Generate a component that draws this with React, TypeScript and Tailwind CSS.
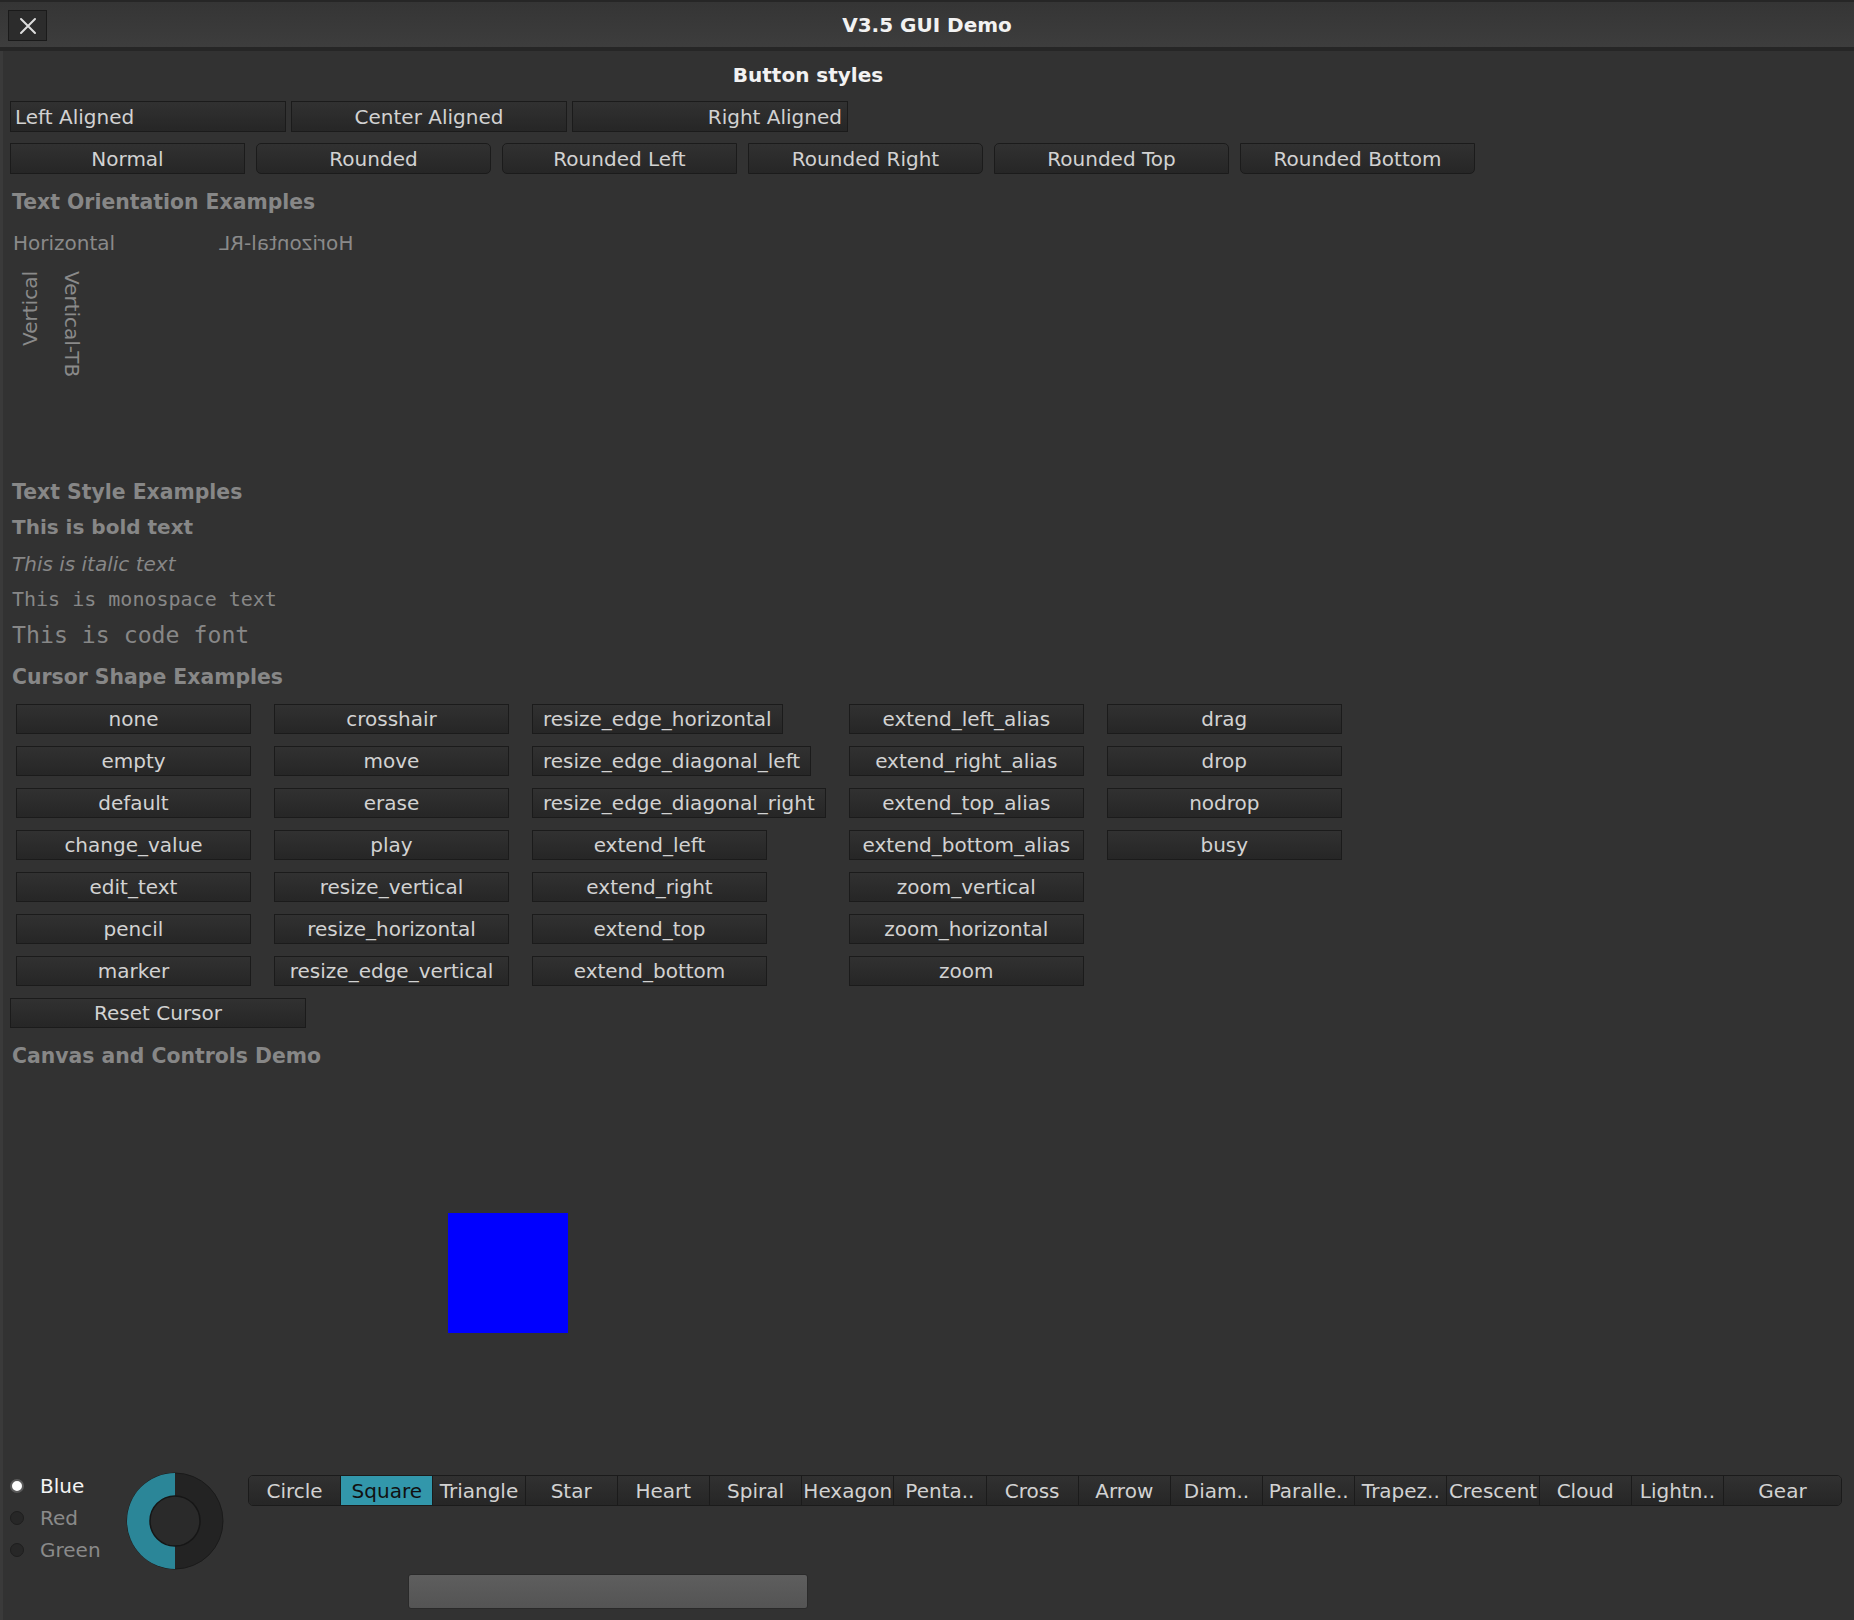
import React from 'react';

const btn =
  'flex items-center border border-[#1b1b1b] bg-linear-to-b from-[#313131] to-[#262626] text-[#d2d2d2] whitespace-nowrap';

const cursorColumns: string[][] = [
  ['none', 'empty', 'default', 'change_value', 'edit_text', 'pencil', 'marker'],
  ['crosshair', 'move', 'erase', 'play', 'resize_vertical', 'resize_horizontal', 'resize_edge_vertical'],
  [
    'resize_edge_horizontal',
    'resize_edge_diagonal_left',
    'resize_edge_diagonal_right',
    'extend_left',
    'extend_right',
    'extend_top',
    'extend_bottom',
  ],
  [
    'extend_left_alias',
    'extend_right_alias',
    'extend_top_alias',
    'extend_bottom_alias',
    'zoom_vertical',
    'zoom_horizontal',
    'zoom',
  ],
  ['drag', 'drop', 'nodrop', 'busy'],
];

const shapes = [
  'Circle',
  'Square',
  'Triangle',
  'Star',
  'Heart',
  'Spiral',
  'Hexagon',
  'Penta..',
  'Cross',
  'Arrow',
  'Diam..',
  'Paralle..',
  'Trapez..',
  'Crescent',
  'Cloud',
  'Lightn..',
];

function SectionTitle({ children, className = '' }: { children: React.ReactNode; className?: string }) {
  return (
    <div className={`flex h-[24px] items-center pl-[2px] text-[20.4px] font-bold text-[#878787] ${className}`}>
      {children}
    </div>
  );
}

function Knob() {
  return (
    <svg width="98" height="98" viewBox="0 0 98 98">
      <circle cx="49" cy="49" r="48" fill="#232323" stroke="#1a1a1a" strokeWidth="1" />
      <path d="M49 1 A48 48 0 0 0 49 97 Z" fill="#2b8698" />
      <circle cx="49" cy="49" r="25" fill="#2a2a2a" stroke="#161616" strokeWidth="1.5" />
    </svg>
  );
}

export default function App() {
  const selectedShape = 'Square';

  return (
    <div
      className="flex h-[1620px] w-[1854px] flex-col overflow-hidden bg-[#323232] text-[20px]"
      style={{ fontFamily: '"DejaVu Sans", "Liberation Sans", sans-serif' }}
    >
      {/* title bar */}
      <div className="relative flex h-[47px] items-center justify-center border-t-2 border-[#262626] bg-linear-to-b from-[#353535] to-[#3d3d3d]">
        <button className="absolute left-[8px] top-[8px] flex h-[31px] w-[39px] items-center justify-center border border-[#1a1a1a] bg-[#2c2c2c]">
          <svg width="20" height="20" viewBox="0 0 20 20" stroke="#dcdcdc" strokeWidth="2" strokeLinecap="round">
            <path d="M3 3 L17 17 M17 3 L3 17" />
          </svg>
        </button>
        <span className="font-bold text-[#f2f2f2]">V3.5 GUI Demo</span>
      </div>
      <div className="h-[4px] bg-[#262626]" />

      <div className="flex flex-1 flex-col border-l-[3px] border-[#3a3a3a] pl-[7px]">
        <div className="mt-[12px] flex h-[24px] w-[1596px] items-center justify-center font-bold text-[#f2f2f2]">
          Button styles
        </div>

        <div className="mt-[14px] flex gap-[5px]">
          <div className={`${btn} h-[31px] w-[276px] justify-start pl-[4px]`}>Left Aligned</div>
          <div className={`${btn} h-[31px] w-[276px] justify-center`}>Center Aligned</div>
          <div className={`${btn} h-[31px] w-[276px] justify-end pr-[5px]`}>Right Aligned</div>
        </div>

        <div className="mt-[11px] flex gap-[11px]">
          <div className={`${btn} h-[31px] w-[235px] justify-center`}>Normal</div>
          <div className={`${btn} h-[31px] w-[235px] justify-center rounded-[5px]`}>Rounded</div>
          <div className={`${btn} h-[31px] w-[235px] justify-center rounded-l-[5px]`}>Rounded Left</div>
          <div className={`${btn} h-[31px] w-[235px] justify-center rounded-r-[5px]`}>Rounded Right</div>
          <div className={`${btn} h-[31px] w-[235px] justify-center rounded-t-[5px]`}>Rounded Top</div>
          <div className={`${btn} h-[31px] w-[235px] justify-center rounded-b-[5px]`}>Rounded Bottom</div>
        </div>

        <SectionTitle className="mt-[16px]">Text Orientation Examples</SectionTitle>

        <div className="mt-[17px] flex h-[24px] items-center text-[#8a8a8a]">
          <span className="w-[209px] pl-[3px]">Horizontal</span>
          <span className="inline-block -scale-x-100">Horizontal-RL</span>
        </div>

        <div className="flex h-[225px] items-start gap-[18px] pl-[7.5px] pt-[16px] text-[#8a8a8a]">
          <span className="rotate-180 leading-[24px] [writing-mode:vertical-rl]">Vertical</span>
          <span className="leading-[24px] [writing-mode:vertical-rl]">Vertical-TB</span>
        </div>

        <SectionTitle>Text Style Examples</SectionTitle>
        <div className="mt-[11px] flex h-[24px] items-center pl-[2px] font-bold text-[#878787]">This is bold text</div>
        <div className="mt-[13px] flex h-[24px] items-center pl-[2px] italic text-[#878787]">This is italic text</div>
        <div
          className="mt-[11px] flex h-[24px] items-center pl-[2px] text-[#878787]"
          style={{ fontFamily: '"DejaVu Sans Mono", "Liberation Mono", monospace' }}
        >
          This is monospace text
        </div>
        <div
          className="mt-[11px] flex h-[26px] items-center pl-[2px] text-[23.2px] text-[#878787]"
          style={{ fontFamily: '"DejaVu Sans Mono", "Liberation Mono", monospace' }}
        >
          This is code font
        </div>

        <SectionTitle className="mt-[17px]">Cursor Shape Examples</SectionTitle>

        <div className="mt-[15px] flex gap-[23px] pl-[6px]">
          {cursorColumns.map((col, i) => (
            <div key={i} className="flex flex-col items-start gap-[12px]">
              {col.map((name) => (
                <div key={name} className={`${btn} h-[30px] min-w-[235px] justify-center px-[10px]`}>
                  {name}
                </div>
              ))}
            </div>
          ))}
        </div>

        <div className={`${btn} mt-[12px] h-[30px] w-[296px] justify-center`}>Reset Cursor</div>

        <SectionTitle className="mt-[16px]">Canvas and Controls Demo</SectionTitle>

        {/* canvas */}
        <div className="h-[402px]">
          <div className="ml-[438px] mt-[145px] h-[120px] w-[120px] bg-[#0000ff]" />
        </div>

        {/* controls */}
        <div className="flex h-[104px] items-start">
          <div className="flex w-[116px] flex-col">
            {['Blue', 'Red', 'Green'].map((c, i) => (
              <div key={c} className="flex h-[32px] items-center">
                {i === 0 ? (
                  <span className="h-[14px] w-[14px] rounded-full border-2 border-[#5a5a5a] bg-white" />
                ) : (
                  <span className="h-[14px] w-[14px] rounded-full border border-[#1e1e1e] bg-[#272727]" />
                )}
                <span className={`ml-[16px] ${i === 0 ? 'text-[#f4f4f4]' : 'text-[#8a8a8a]'}`}>{c}</span>
              </div>
            ))}
          </div>
          <div className="mt-[2px]">
            <Knob />
          </div>
          <div className="ml-[24px] mt-[5px] flex h-[31px] w-[1594px] overflow-hidden rounded-[5px] border border-[#1b1b1b]">
            {shapes.map((s) => (
              <div
                key={s}
                className={`flex h-full w-[92.2px] shrink-0 items-center justify-center border-r border-[#1b1b1b] ${
                  s === selectedShape
                    ? 'bg-[#3297ab] text-[#111]'
                    : 'bg-linear-to-b from-[#313131] to-[#262626] text-[#d2d2d2]'
                }`}
              >
                {s}
              </div>
            ))}
            <div className="flex h-full flex-1 items-center justify-center bg-linear-to-b from-[#313131] to-[#262626] text-[#d2d2d2]">
              Gear
            </div>
          </div>
        </div>

        <div className="ml-[398px] h-[35px] w-[400px] rounded-[3px] border border-[#2a2a2a] bg-linear-to-b from-[#5e5e5e] to-[#545454]" />
      </div>
    </div>
  );
}
